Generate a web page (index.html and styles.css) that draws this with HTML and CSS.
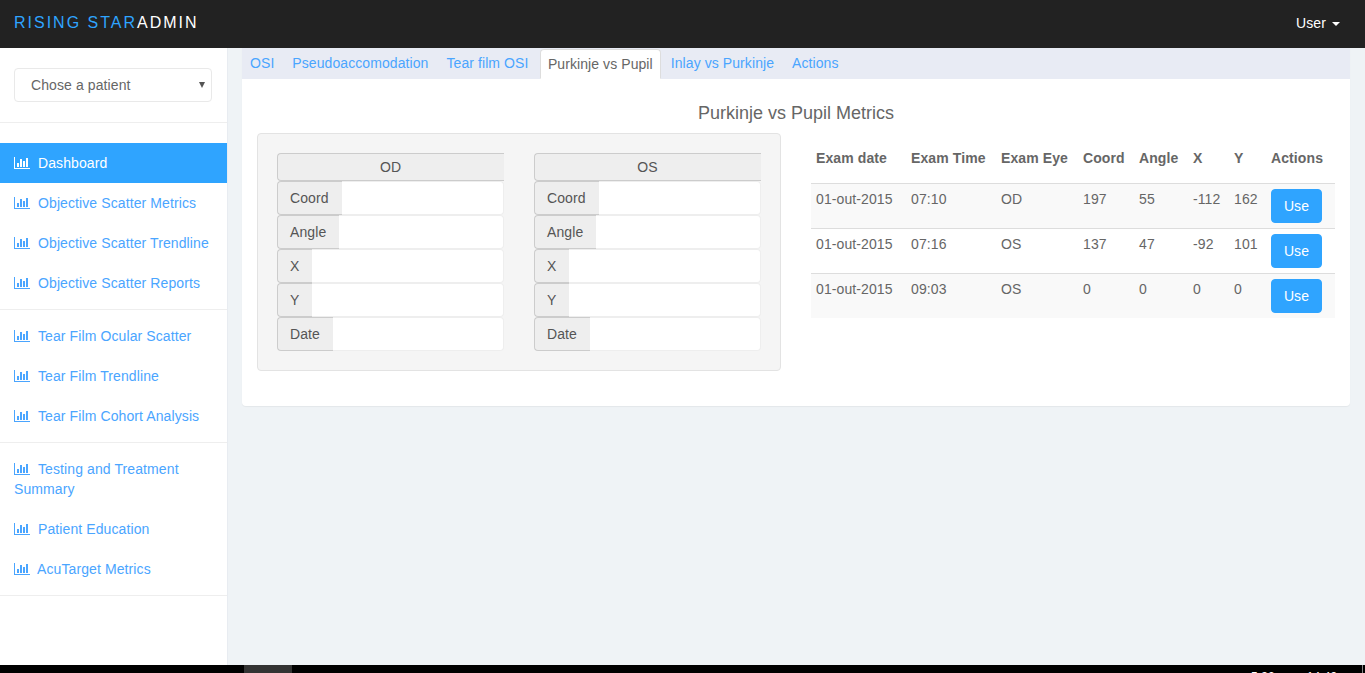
FILE: index.html
```html
<!DOCTYPE html>
<html lang="pt">
<head>
  <meta charset="UTF-8">
  <title>Rising Star Admin</title>
  <meta name="viewport" content="width=device-width, initial-scale=1">
  <link rel="stylesheet" href="styles.css">
</head>
<body>
  <svg class="icon-defs" width="0" height="0">
    <symbol id="chart" viewBox="0 0 16 12">
      <path d="M0 0h1v11h15v1H0z"/>
      <path d="M3 6h2v4H3zM6 2h2v8H6zM9 4h2v6H9zM12 1h2v9h-2z"/>
    </symbol>
  </svg>

  <header class="navbar">
    <a class="brand" href="#"><span class="brand-blue">RISING STAR</span>ADMIN</a>
    <a class="user-menu" href="#">User <span class="caret"></span></a>
  </header>

  <div class="wrapper">
    <aside class="sidebar">
      <div class="patient-box">
        <div class="select-wrap">
          <select class="patient-select">
            <option>Chose a patient</option>
          </select>
        </div>
      </div>

      <ul class="side-nav first">
        <li class="active"><a href="#"><svg class="icon"><use href="#chart"/></svg>Dashboard</a></li>
        <li><a href="#"><svg class="icon"><use href="#chart"/></svg>Objective Scatter Metrics</a></li>
        <li><a href="#"><svg class="icon"><use href="#chart"/></svg>Objective Scatter Trendline</a></li>
        <li><a href="#"><svg class="icon"><use href="#chart"/></svg>Objective Scatter Reports</a></li>
      </ul>
      <ul class="side-nav">
        <li><a href="#"><svg class="icon"><use href="#chart"/></svg>Tear Film Ocular Scatter</a></li>
        <li><a href="#"><svg class="icon"><use href="#chart"/></svg>Tear Film Trendline</a></li>
        <li><a href="#"><svg class="icon"><use href="#chart"/></svg>Tear Film Cohort Analysis</a></li>
      </ul>
      <ul class="side-nav">
        <li><a href="#"><svg class="icon"><use href="#chart"/></svg>Testing and Treatment Summary</a></li>
        <li><a href="#"><svg class="icon"><use href="#chart"/></svg>Patient Education</a></li>
        <li><a href="#"><svg class="icon tight"><use href="#chart"/></svg>AcuTarget Metrics</a></li>
      </ul>
    </aside>

    <main class="content">
      <div class="panel">
        <ul class="tabs">
          <li><a href="#">OSI</a></li>
          <li><a href="#">Pseudoaccomodation</a></li>
          <li><a href="#">Tear film OSI</a></li>
          <li class="active"><a href="#">Purkinje vs Pupil</a></li>
          <li><a href="#">Inlay vs Purkinje</a></li>
          <li><a href="#">Actions</a></li>
        </ul>

        <div class="tab-body">
          <h3 class="title">Purkinje vs Pupil Metrics</h3>
          <div class="columns">
            <div class="well">
              <div class="eye">
                <div class="eye-head">OD</div>
                <div class="field"><span class="addon">Coord</span><input type="text"></div>
                <div class="field"><span class="addon">Angle</span><input type="text"></div>
                <div class="field"><span class="addon">X</span><input type="text"></div>
                <div class="field"><span class="addon">Y</span><input type="text"></div>
                <div class="field"><span class="addon">Date</span><input type="text"></div>
              </div>
              <div class="eye">
                <div class="eye-head">OS</div>
                <div class="field"><span class="addon">Coord</span><input type="text"></div>
                <div class="field"><span class="addon">Angle</span><input type="text"></div>
                <div class="field"><span class="addon">X</span><input type="text"></div>
                <div class="field"><span class="addon">Y</span><input type="text"></div>
                <div class="field"><span class="addon">Date</span><input type="text"></div>
              </div>
            </div>

            <div class="table-col">
              <table class="exams">
                <thead>
                  <tr>
                    <th class="col-date">Exam date</th>
                    <th class="col-time">Exam Time</th>
                    <th class="col-eye">Exam Eye</th>
                    <th class="col-coord">Coord</th>
                    <th class="col-angle">Angle</th>
                    <th class="col-x">X</th>
                    <th class="col-y">Y</th>
                    <th>Actions</th>
                  </tr>
                </thead>
                <tbody>
                  <tr>
                    <td>01-out-2015</td><td>07:10</td><td>OD</td><td>197</td><td>55</td><td>-112</td><td>162</td>
                    <td><button class="btn-use">Use</button></td>
                  </tr>
                  <tr>
                    <td>01-out-2015</td><td>07:16</td><td>OS</td><td>137</td><td>47</td><td>-92</td><td>101</td>
                    <td><button class="btn-use">Use</button></td>
                  </tr>
                  <tr>
                    <td>01-out-2015</td><td>09:03</td><td>OS</td><td>0</td><td>0</td><td>0</td><td>0</td>
                    <td><button class="btn-use">Use</button></td>
                  </tr>
                </tbody>
              </table>
            </div>
          </div>
        </div>
      </div>
    </main>
  </div>

  <footer class="taskbar">
    <span class="task-item"></span>
    <span class="task-text date">5:32</span>
    <span class="task-text time">14:49</span>
    <span class="task-edge"></span>
  </footer>
</body>
</html>
```

FILE: styles.css
```css
* {
  box-sizing: border-box;
}
html, body {
  height: 100%;
}
body {
  margin: 0;
  height: 673px;
  overflow: hidden;
  display: flex;
  flex-direction: column;
  font-family: "Liberation Sans", Arial, sans-serif;
  font-size: 14px;
  line-height: 20px;
  letter-spacing: 0.1px;
  color: #666;
  background-color: #eff3f6;
}
a {
  text-decoration: none;
}
.icon-defs {
  display: block;
  height: 0;
}

/* top bar */
.navbar {
  flex: 0 0 48px;
  display: flex;
  align-items: center;
  justify-content: space-between;
  padding: 0 25px 2px 14px;
  background-color: #222;
}
.brand {
  font-size: 16px;
  letter-spacing: 2px;
  color: #fff;
}
.brand-blue {
  color: #2fa4ff;
}
.user-menu {
  color: #fff;
}
.caret {
  display: inline-block;
  margin-left: 2px;
  vertical-align: middle;
  border-top: 4px solid #fff;
  border-left: 4px solid transparent;
  border-right: 4px solid transparent;
}

/* sidebar */
.wrapper {
  flex: 1;
  display: flex;
  min-height: 0;
}
.sidebar {
  flex: 0 0 228px;
  background-color: #fff;
  border-right: 1px solid #e8ecf1;
}
.patient-box {
  padding: 20px 15px 20px 14px;
}
.select-wrap {
  position: relative;
}
.select-wrap::after {
  content: "";
  position: absolute;
  top: 14px;
  right: 7px;
  border-top: 6px solid #555;
  border-left: 3px solid transparent;
  border-right: 3px solid transparent;
}
.patient-select {
  display: block;
  width: 100%;
  height: 34px;
  padding: 0 12px 0 16px;
  appearance: none;
  background-color: #fff;
  border: 1px solid #e9e9e9;
  border-radius: 4px;
  font-family: inherit;
  font-size: 14px;
  letter-spacing: inherit;
  color: #666;
}
.side-nav {
  list-style: none;
  margin: 0;
  padding: 6px 0;
  border-bottom: 1px solid #eee;
}
.side-nav.first {
  padding-top: 20px;
  border-top: 1px solid #eee;
}
.side-nav a {
  display: block;
  padding: 10px 14px;
  color: #4aa5ff;
}
.side-nav .active a {
  background-color: #2fa4ff;
  color: #fff;
}
.icon {
  display: inline-block;
  width: 16px;
  height: 12px;
  margin-right: 8px;
  vertical-align: -1px;
  fill: currentColor;
}
.icon.tight {
  margin-right: 7px;
}

/* main area */
.content {
  flex: 1;
  min-width: 0;
  padding: 0 15px 0 14px;
}
.panel {
  background-color: #fff;
  border-radius: 0 0 4px 4px;
  box-shadow: 0 1px 1px rgba(0,0,0,0.05);
}
.tabs {
  display: flex;
  height: 31px;
  list-style: none;
  margin: 0;
  padding: 1px 0 0;
  background-color: #e8ebf4;
  letter-spacing: 0.08px;
}
.tabs li {
  margin-right: 2px;
}
.tabs a {
  display: block;
  height: 30px;
  padding: 3px 8px 0;
  color: #4aa5ff;
  border-top: 1px solid transparent;
}
.tabs .active {
  margin-left: 1.5px;
}
.tabs .active a {
  padding: 4px 7px 0;
  background-color: #fff;
  color: #666;
  border: 1px solid #ddd;
  border-bottom-color: #fff;
  border-radius: 4px 4px 0 0;
}
.tab-body {
  padding: 24px 15px 15px;
}
.title {
  margin: 0 0 10px;
  font-size: 18px;
  font-weight: normal;
  line-height: 20px;
  letter-spacing: 0;
  text-align: center;
}
.columns {
  display: flex;
  gap: 30px;
}
.well {
  flex: 0 0 524px;
  min-width: 0;
  display: flex;
  gap: 30px;
  height: 238px;
  margin-bottom: 20px;
  padding: 19px;
  background-color: #f5f5f5;
  border: 1px solid #e3e3e3;
  border-radius: 4px;
}
.eye {
  flex: 1;
  min-width: 0;
}
.eye-head {
  height: 28px;
  padding-right: 1px;
  line-height: 26px;
  text-align: center;
  color: #555;
  background-color: #eee;
  border: 1px solid #ccc;
  border-right: 0;
  border-radius: 4px 0 0 4px;
}
.field {
  display: flex;
  height: 34px;
}
.addon {
  padding: 6px 13px 6px 12px;
  color: #555;
  background-color: #eee;
  border: 1px solid #ccc;
  border-right: 0;
  border-radius: 4px 0 0 4px;
}
.field input {
  flex: 1;
  width: 0;
  min-width: 0;
  border: 1px solid #eee;
  border-left: 0;
  border-radius: 0 4px 4px 0;
  background-color: #fff;
}

/* exam table */
.table-col {
  flex: 1;
  min-width: 0;
}
.exams {
  width: 100%;
  table-layout: fixed;
  border-collapse: collapse;
}
.col-date { width: 95px; }
.col-time { width: 90px; }
.col-eye { width: 82px; }
.col-coord { width: 56px; }
.col-angle { width: 54px; }
.col-x { width: 41px; }
.col-y { width: 37px; }
.exams th {
  padding: 15px 5px;
  text-align: left;
  white-space: nowrap;
  border-bottom: 1px solid #ddd;
}
.exams td {
  height: 45px;
  padding: 5px;
  vertical-align: top;
  white-space: nowrap;
  border-top: 1px solid #ddd;
}
.exams thead + tbody tr:first-child td {
  border-top: 0;
}
.exams tbody tr:last-child td {
  height: 44px;
}
.exams tbody tr:nth-child(odd) {
  background-color: #f9f9f9;
}
.btn-use {
  display: block;
  width: 51px;
  height: 34px;
  padding: 0;
  background-color: #2fa4ff;
  border: 1px solid #2fa4ff;
  border-radius: 4px;
  font-family: inherit;
  font-size: 14px;
  letter-spacing: inherit;
  color: #fff;
}

/* strip of the desktop taskbar below the window */
.taskbar {
  flex: 0 0 8px;
  display: flex;
  overflow: hidden;
  background-color: #000;
  color: #fff;
  font-size: 12px;
  line-height: 20px;
}
.task-item {
  width: 48px;
  margin-left: 244px;
  background-color: #333;
}
.task-text {
  margin-top: 2px;
  white-space: nowrap;
}
.task-text.date {
  margin-left: 959px;
}
.task-text.time {
  margin-left: 32px;
}
.task-edge {
  width: 1px;
  margin-left: 25px;
  background-color: #888;
}
```
